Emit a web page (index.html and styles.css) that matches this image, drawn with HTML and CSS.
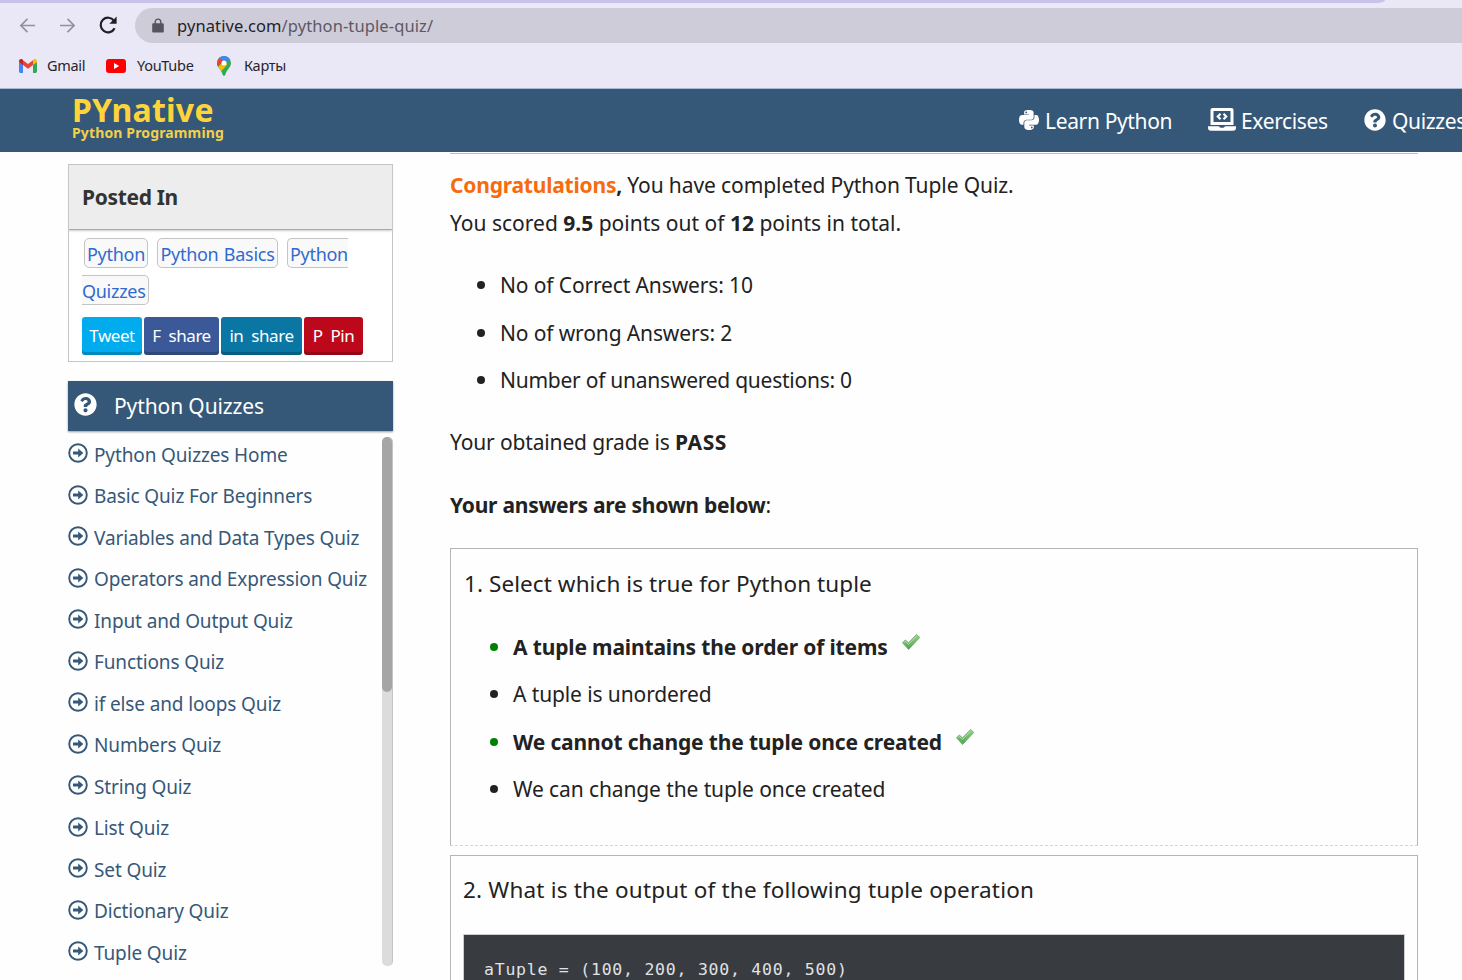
FILE: index.html
```html
<!DOCTYPE html>
<html lang="en">
<head>
<meta charset="utf-8">
<title>Python Tuple Quiz</title>
<link rel="stylesheet" href="styles.css">
</head>
<body>
<svg class="defs" width="0" height="0">
  <defs>
    <symbol id="i-question" viewBox="0 0 512 512"><path fill="currentColor" d="M504 256c0 136.997-111.043 248-248 248S8 392.997 8 256C8 119.083 119.043 8 256 8s248 111.083 248 248zM262.655 90c-54.497 0-89.255 22.957-116.549 63.758-3.536 5.286-2.353 12.415 2.715 16.258l34.699 26.31c5.205 3.947 12.621 3.008 16.665-2.122 17.864-22.658 30.113-35.797 57.303-35.797 20.429 0 45.698 13.148 45.698 32.958 0 14.976-12.363 22.667-32.534 33.976C247.128 238.528 216 254.941 216 296v4c0 6.627 5.373 12 12 12h56c6.627 0 12-5.373 12-12v-1.333c0-28.462 83.186-29.647 83.186-106.667 0-58.002-60.165-102-116.531-102zM256 338c-25.365 0-46 20.635-46 46 0 25.364 20.635 46 46 46s46-20.636 46-46c0-25.365-20.635-46-46-46z"/></symbol>
    <symbol id="i-arrow" viewBox="0 0 20 20"><circle cx="10" cy="10" r="8.8" fill="none" stroke="currentColor" stroke-width="1.9"/><path fill="currentColor" d="M5 8.600h5.200V5.500l5.100 4.500-5.100 4.500v-3.100H5z"/></symbol>
    <linearGradient id="g-check" x1="0" y1="0" x2="0" y2="1"><stop offset="0" stop-color="#9bd08d"/><stop offset="1" stop-color="#4ea24e"/></linearGradient>
    <symbol id="i-check" viewBox="0 0 20 18"><path fill="url(#g-check)" stroke="#6aad68" stroke-width=".8" stroke-linejoin="round" d="M1.500 9.800 4.300 7l3.200 2.800L15.500 1.500l3.300 2.900L7.600 16.500z"/><path fill="none" stroke="#b5deab" stroke-width="1" d="M3 9.700 4.400 8.400l3.200 2.900L15.700 3"/></symbol>
  </defs>
</svg>

<div class="chrome">
  <div class="tabline"></div>
  <div class="toolbar">
    <svg class="nav-icon" viewBox="0 0 18 18"><path d="M17 9H2M9 2 2 9l7 7"/></svg>
    <svg class="nav-icon" viewBox="0 0 18 18"><path d="M1 9h15M9 2l7 7-7 7"/></svg>
    <svg class="reload" viewBox="0 0 20 20"><path d="M16.600 13.200a7.300 7.300 0 1 1-.6-7.400"/><path class="fill" d="M18.600 1.600v7.200h-7.200z"/></svg>
    <div class="omnibox">
      <svg class="lock" viewBox="0 0 12 15"><path fill="#55555d" d="M1.400 5.200h9.200c.7 0 1.200.5 1.200 1.200v7c0 .7-.5 1.200-1.200 1.200H1.400c-.7 0-1.200-.5-1.200-1.200v-7c0-.7.5-1.200 1.200-1.200z"/><path fill="none" stroke="#55555d" stroke-width="1.4" d="M3.200 6V3.900a2.800 2.800 0 0 1 5.600 0V6"/></svg>
      <span class="url">pynative.com<span class="path">/python-tuple-quiz/</span></span>
    </div>
  </div>
  <div class="bookmarks">
    <a class="bm bm-gmail"><svg width="18" height="14" viewBox="0 0 18 14"><path fill="#4285f4" d="M0 3v9.600C0 13.400.6 14 1.400 14H4V5z"/><path fill="#34a853" d="M18 3v9.600c0 .8-.6 1.400-1.400 1.400H14V5z"/><path fill="#ea4335" d="M4 1.200 9 5l5-3.800V6L9 9.800 4 6z"/><path fill="#c5221f" d="M0 2.200C0 .4 2-.6 3.400.5L4 1v5L0 3z"/><path fill="#fbbc04" d="M18 2.200C18 .4 16-.6 14.600.5L14 1v5l4-3z"/></svg><span>Gmail</span></a>
    <a class="bm bm-yt"><svg width="20" height="14" viewBox="0 0 20 14"><rect width="20" height="14" rx="3" fill="#f00"/><path fill="#fff" d="M8 4v6l5.200-3z"/></svg><span>YouTube</span></a>
    <a class="bm bm-maps"><svg width="14" height="20" viewBox="0 0 14 20"><clipPath id="pin"><path d="M7 0a7 7 0 0 1 7 7c0 4.500-4.300 6.400-5.600 11.500C8 20.200 6 20.200 5.600 18.500 4.300 13.400 0 11.500 0 7a7 7 0 0 1 7-7z"/></clipPath><g clip-path="url(#pin)"><path fill="#34a853" d="M0 0h14v20H0z"/><path fill="#fbbc04" d="M0 12.500 8 3l2 6-7.500 8z"/><path fill="#ea4335" d="M-1-1h3.500L7 5 0 11z"/><path fill="#4285f4" d="M2 2 6-1h5l2 3.500-6 7L4.500 7 6 4.500z"/></g><circle cx="7" cy="7" r="2.500" fill="#fff"/></svg><span>Карты</span></a>
  </div>
</div>

<header class="site-header">
  <div class="brand"><div class="brand-name">PYnative</div><div class="brand-sub">Python Programming</div></div>
  <nav class="menu">
    <a><svg class="m-python" viewBox="0 32 448 448"><path fill="currentColor" d="M439.800 200.500c-7.700-30.900-22.300-54.200-53.400-54.200h-40.100v47.400c0 36.800-31.200 67.800-66.800 67.800H172.700c-29.200 0-53.400 25-53.400 54.300v101.800c0 29 25.200 46 53.400 54.300 33.800 9.900 66.300 11.700 106.800 0 26.900-7.800 53.400-23.500 53.400-54.300v-40.700H226.200v-13.600h160.200c31.100 0 42.600-21.700 53.400-54.200 11.200-33.500 10.700-65.700 0-108.600zM286.200 404c11.100 0 20.100 9.100 20.100 20.300 0 11.300-9 20.400-20.100 20.400-11 0-20.100-9.200-20.100-20.400.1-11.300 9.100-20.300 20.100-20.300zM167.800 248.100h106.800c29.700 0 53.400-24.500 53.400-54.300V91.900c0-29-24.400-50.700-53.400-55.600-35.800-5.900-74.700-5.600-106.800.1-45.200 8-53.400 24.700-53.400 55.600v40.700h106.900v13.600h-147c-31.100 0-58.300 18.700-66.800 54.200-9.800 40.700-10.200 66.100 0 108.600 7.600 31.600 25.700 54.200 56.800 54.200H101v-48.800c0-35.300 30.500-66.400 66.800-66.400zm-6.700-142.600c-11.100 0-20.100-9.100-20.100-20.300.1-11.300 9-20.400 20.100-20.400 11 0 20.100 9.200 20.100 20.400s-9 20.300-20.100 20.300z"/></svg><span>Learn Python</span></a>
    <a><svg class="m-laptop" viewBox="0 0 28 23"><path fill="currentColor" fill-rule="evenodd" d="M4.500 0h19A2 2 0 0 1 25.500 2v15h-23V2a2 2 0 0 1 2-2zM5.500 3v11h17V3z"/><path fill="currentColor" d="M0 18.300h11.200c.2 1 .7 1.400 1.500 1.400h2.600c.8 0 1.300-.4 1.500-1.400H28v1.500a3 3 0 0 1-3 3H3a3 3 0 0 1-3-3z"/><path fill="none" stroke="currentColor" stroke-width="2.200" d="M12.500 5.700 9.800 8.500l2.700 2.800M15.500 5.700l2.700 2.800-2.700 2.800"/></svg><span>Exercises</span></a>
    <a><svg class="m-q" viewBox="0 0 512 512"><use href="#i-question"/></svg><span>Quizzes</span></a>
  </nav>
</header>

<div class="page">
  <aside class="sidebar">
    <section class="posted">
      <h4>Posted In</h4>
      <div class="posted-body">
        <div class="tags"><a>Python</a> <a>Python Basics</a> <a>Python Quizzes</a></div>
        <div class="share"><a class="tw">Tweet</a><a class="fb">F&nbsp; share</a><a class="li">in&nbsp; share</a><a class="pin">P&nbsp; Pin</a></div>
      </div>
    </section>
    <section class="quizzes">
      <h3><svg viewBox="0 0 512 512"><use href="#i-question"/></svg><span>Python Quizzes</span></h3>
      <div class="scroller">
        <ul>
          <li><svg><use href="#i-arrow"/></svg><span>Python Quizzes Home</span></li>
          <li><svg><use href="#i-arrow"/></svg><span>Basic Quiz For Beginners</span></li>
          <li><svg><use href="#i-arrow"/></svg><span>Variables and Data Types Quiz</span></li>
          <li><svg><use href="#i-arrow"/></svg><span>Operators and Expression Quiz</span></li>
          <li><svg><use href="#i-arrow"/></svg><span>Input and Output Quiz</span></li>
          <li><svg><use href="#i-arrow"/></svg><span>Functions Quiz</span></li>
          <li><svg><use href="#i-arrow"/></svg><span>if else and loops Quiz</span></li>
          <li><svg><use href="#i-arrow"/></svg><span>Numbers Quiz</span></li>
          <li><svg><use href="#i-arrow"/></svg><span>String Quiz</span></li>
          <li><svg><use href="#i-arrow"/></svg><span>List Quiz</span></li>
          <li><svg><use href="#i-arrow"/></svg><span>Set Quiz</span></li>
          <li><svg><use href="#i-arrow"/></svg><span>Dictionary Quiz</span></li>
          <li><svg><use href="#i-arrow"/></svg><span>Tuple Quiz</span></li>
        </ul>
        <div class="track"><div class="thumb"></div></div>
      </div>
    </section>
  </aside>

  <main class="content">
    <div class="prev-box"></div>
    <p class="result"><b><span class="congrats">Congratulations</span>,</b> You have completed Python Tuple Quiz.</p>
    <p class="score">You scored <b>9.5</b> points out of <b>12</b> points in total.</p>
    <ul class="stats">
      <li>No of Correct Answers: 10</li>
      <li>No of wrong Answers: 2</li>
      <li>Number of unanswered questions: 0</li>
    </ul>
    <p class="grade">Your obtained grade is <b>PASS</b></p>
    <p class="shown"><b>Your answers are shown below</b>:</p>
    <section class="question">
      <p class="q">1. Select which is true for Python tuple</p>
      <ul class="opts">
        <li class="right"><b>A tuple maintains the order of items</b><svg><use href="#i-check"/></svg></li>
        <li>A tuple is unordered</li>
        <li class="right"><b>We cannot change the tuple once created</b><svg><use href="#i-check"/></svg></li>
        <li>We can change the tuple once created</li>
      </ul>
    </section>
    <section class="question coded">
      <p class="q">2. What is the output of the following tuple operation</p>
      <pre>aTuple = (100, 200, 300, 400, 500)</pre>
    </section>
  </main>
</div>
</body>
</html>
```
FILE: styles.css
```css
* { box-sizing: border-box; }
html, body { height: 980px; overflow: hidden; }
body { margin: 0; background: #fefefe; color: #222; font-family: "Noto Sans", "Open Sans", sans-serif; }
ul { list-style: none; margin: 0; padding: 0; }
.defs { position: absolute; }

.chrome { height: 89px; background: #eae7f6; border-bottom: 1px solid #a9b6d3; }
.tabline { width: 1385px; height: 3px; background: #c9c1ea; border-bottom-right-radius: 8px 3px; }
.toolbar { display: flex; align-items: center; height: 45px; padding-left: 19px; }
.nav-icon { width: 17px; height: 17px; margin-right: 23px; fill: none; stroke: #93919c; stroke-width: 1.8; }
.nav-icon + .nav-icon { margin-right: 22px; }
.reload { width: 20px; height: 20px; margin: -2px 17px 0 0; fill: none; stroke: #1f1f24; stroke-width: 2.2; }
.reload .fill { fill: #1f1f24; stroke: none; }
.omnibox { flex: 1; display: flex; align-items: center; height: 35px; padding-left: 17px; background: #cfccda; border-radius: 18px 0 0 18px; }
.lock { width: 12px; height: 15px; margin-right: 13px; }
.url { font-size: 16.500px; line-height: 35px; letter-spacing: .1px; color: #222228; }
.path { color: #5b5963; }
.bookmarks { display: flex; align-items: center; height: 34px; padding-left: 19px; font-size: 14.500px; letter-spacing: -.3px; color: #26252c; }
.bm { display: flex; align-items: center; }
.bm svg { margin-top: 2px; }
.bm-gmail { gap: 10px; width: 87px; }
.bm-yt { gap: 11px; width: 111px; }
.bm-maps { gap: 13px; }

.site-header { display: flex; justify-content: space-between; height: 63px; padding-left: 72px; background: #365878; color: #fff; overflow: hidden; }
.brand { color: #ffd43b; font-weight: 700; padding-top: 3px; }
.brand-name { font-size: 32px; line-height: 36px; letter-spacing: .25px; }
.brand-sub { margin-top: -4px; font-size: 14px; line-height: 18px; letter-spacing: .14px; white-space: nowrap; color: #f2d04a; }
.menu { display: flex; width: 443px; flex: none; font-size: 21px; line-height: 64px; letter-spacing: -.35px; white-space: nowrap; }
.menu a { display: flex; flex: none; }
.m-python { width: 20px; height: 20px; margin: 21px 6px 0 0; }
.menu a:nth-child(1) { width: 189px; }
.menu a:nth-child(2) { width: 156px; }
.m-laptop { width: 28px; height: 23px; margin: 19px 5px 0 0; }
.m-q { width: 22px; height: 22px; margin: 20px 6px 0 0; }

.page { display: flex; height: 828px; overflow: hidden; }
.sidebar { width: 325px; margin: 12px 57px 0 68px; flex: none; }
.posted { height: 198px; border: 1px solid #c4c4c4; background: #fff; }
.posted h4 { margin: 0; height: 65px; padding-left: 13px; background: #ededed; border-bottom: 1px solid #aaa; box-shadow: 0 1px 2px #ccc; font-size: 21px; line-height: 64px; letter-spacing: -.33px; color: #333; }
.posted-body { padding: 6px 13px 0; }
.tags { font-size: 18px; line-height: 37px; letter-spacing: -.28px; word-spacing: 1px; }
.tags a { color: #306ad0; background: #f9f9f9; border: 1px solid #c4c4c4; border-radius: 5px; padding: 3px 2px 1px; margin: 0 2px; }
.share { display: flex; gap: 2px; margin-top: 7px; font-size: 17px; line-height: 37px; letter-spacing: -.45px; color: #fff; text-align: center; white-space: nowrap; }
.share a { height: 38px; border-radius: 3px; box-shadow: inset 0 -3px 0 rgba(0,0,0,.2); }
.tw { width: 60px; background: #00aced; }
.fb { width: 75px; background: #3b5998; }
.li { width: 81px; background: #0976a4; }
.pin { width: 59px; background: #bd081c; }

.quizzes { margin-top: 19px; }
.quizzes h3 { display: flex; margin: 0; height: 50px; padding-left: 6px; background: #365878; color: #fff; font-size: 21px; font-weight: 400; line-height: 50px; letter-spacing: -.11px; box-shadow: 0 1px 2px #999; }
.quizzes h3 svg { width: 23px; height: 23px; margin: 12px 17px 0 0; }
.scroller { display: flex; justify-content: space-between; padding-top: 6px; }
.scroller ul { margin-top: -.300px; }
.scroller li { display: flex; height: 41.500px; font-size: 19px; line-height: 37px; letter-spacing: -.13px; color: #365878; white-space: nowrap; }
.scroller li svg { width: 20px; height: 20px; margin: 6.500px 6px 0 0; }
.track { width: 11px; height: 529px; background: #dcdcdc; border-right: 1px solid #c4c4c4; border-radius: 5px; }
.thumb { width: 10px; height: 255px; background: #a5a5a5; border-radius: 5px; }

.content { width: 968px; flex: none; font-size: 21px; line-height: 38px; }
.content p { margin: 0; white-space: nowrap; }
.prev-box { height: 2px; border-bottom: 1px solid #bbb; }
.content .result { margin-top: 12px; letter-spacing: -.08px; word-spacing: -.1px; }
.result b { letter-spacing: -.21px; }
.congrats { color: #f76b10; }
.stats { margin-top: 24px; letter-spacing: -.13px; }
.stats li:last-child { letter-spacing: -.25px; }
.stats li, .opts li { display: flex; height: 47.500px; white-space: nowrap; }
.stats li::before, .opts li::before { content: ""; width: 8px; height: 8px; border-radius: 50%; background: #222; }
.stats li::before { margin: 15px 15px 0 27px; }
.content .grade { margin-top: 14px; letter-spacing: -.15px; }
.grade b { letter-spacing: .6px; }
.content .shown { margin-top: 25px; }
.shown b { letter-spacing: -.26px; }
.question { height: 298px; margin-bottom: 9px; padding: 0 13px; border: 1px solid #b5b5b5; border-bottom: 1px dashed #d5d5d5; }
.shown + .question { margin-top: 24px; }
.question .q { padding-top: 16px; font-size: 22.500px; letter-spacing: .08px; }
.opts { margin-top: 25px; letter-spacing: -.11px; }
.opts b { letter-spacing: -.15px; }
.opts li::before { margin: 15px 15px 0 26px; }
.opts .right::before { background: #008000; }
.opts svg { width: 20px; height: 18px; margin: 5px 0 0 13px; }
.coded { overflow: hidden; height: 125px; margin-bottom: 0; border-bottom: 0; }
.coded .q { margin-left: -1px; padding-top: 15px; letter-spacing: .19px; }
pre { height: 46px; margin: 25px -1px 0; padding: 25px 20px 0; background: #383b40; border: 1px solid #ccc; border-bottom: 0; color: #e0e2e4; font: 16.500px/20px "DejaVu Sans Mono", monospace; letter-spacing: .76px; }
```
